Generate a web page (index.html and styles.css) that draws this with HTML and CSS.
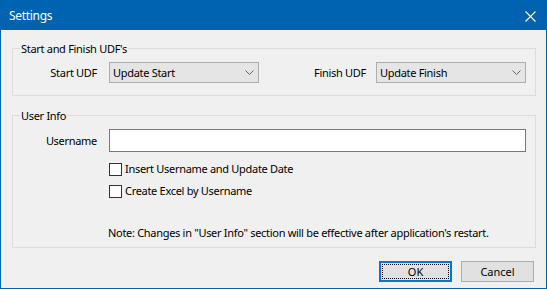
FILE: index.html
```html
<!DOCTYPE html>
<html lang="en">
<head>
    <meta charset="UTF-8">
    <title>Settings</title>
    <link rel="stylesheet" href="styles.css">
</head>
<body>
<div class="window">
    <div class="titlebar">
        <span class="title">Settings</span>
        <svg class="close" width="11" height="11" viewBox="0 0 11 11">
            <path d="M0.5 0.5 L10.5 10.5 M10.5 0.5 L0.5 10.5" stroke="#fff" stroke-width="1.1" fill="none"/>
        </svg>
    </div>

    <div class="content">
        <div class="group group-udf">
            <div class="group-title">Start and Finish UDF's</div>
            <div class="udf-row">
                <span class="label label-start">Start UDF</span>
                <div class="combo">
                    <span>Update Start</span>
                    <svg width="9" height="5" viewBox="0 0 9 5"><path d="M0.5 0.5 L4.5 4.5 L8.5 0.5" stroke="#606060" fill="none"/></svg>
                </div>
                <span class="label label-finish">Finish UDF</span>
                <div class="combo">
                    <span>Update Finish</span>
                    <svg width="9" height="5" viewBox="0 0 9 5"><path d="M0.5 0.5 L4.5 4.5 L8.5 0.5" stroke="#606060" fill="none"/></svg>
                </div>
            </div>
        </div>

        <div class="group group-user">
            <div class="group-title">User Info</div>
            <div class="user-row">
                <span class="label label-start">Username</span>
                <div class="textbox"></div>
            </div>
            <div class="check-row first">
                <span class="checkbox"></span>
                <span>Insert Username and Update Date</span>
            </div>
            <div class="check-row">
                <span class="checkbox"></span>
                <span>Create Excel by Username</span>
            </div>
            <div class="note">Note: Changes in "User Info" section will be effective after application's restart.</div>
        </div>

        <div class="buttons">
            <button class="btn btn-default">OK</button>
            <button class="btn">Cancel</button>
        </div>
    </div>
</div>
</body>
</html>
```

FILE: styles.css
```css
* {
    margin: 0;
    padding: 0;
    box-sizing: border-box;
}
body {
    font-family: 'Segoe UI', 'Noto Sans', sans-serif;
    font-size: 11px;
    letter-spacing: -0.3px;
    line-height: 16px;
    color: #000;
    background: #f0f0f0;
}
.window {
    width: 547px;
    height: 289px;
    border: 1px solid #0063b1;
    background: #f0f0f0;
    display: flex;
    flex-direction: column;
}
.titlebar {
    flex-shrink: 0;
    height: 29px;
    background: #0063b1;
    color: #fff;
    font-size: 12px;
    letter-spacing: -0.3px;
    display: flex;
    align-items: center;
    justify-content: space-between;
    padding: 0 10px 0 8px;
}
.close {
    margin-top: 1px;
}
.content {
    flex: 1;
    padding: 18px 10px 0 11px;
    display: flex;
    flex-direction: column;
}
.group {
    border: 1px solid #dcdcdc;
    padding: 0 9px 0 0;
}
.group-title {
    margin: -8px 0 0 7px;
    padding: 0 1px;
    width: fit-content;
    background: #f0f0f0;
}
.udf-row {
    display: flex;
    align-items: center;
    margin-top: 5px;
    padding-bottom: 12px;
}
.label-start {
    width: 84px;
    text-align: right;
    margin-right: 12px;
}
.label-finish {
    flex: 1;
    text-align: right;
    margin-right: 10px;
}
.combo {
    width: 150px;
    height: 21px;
    background: #e5e5e5;
    border: 1px solid #adadad;
    display: flex;
    align-items: center;
    justify-content: space-between;
    padding: 0 4px 0 3px;
}
.group-user {
    margin-top: 19px;
    padding-bottom: 6px;
}
.user-row {
    display: flex;
    align-items: center;
    margin-top: 5px;
}
.textbox {
    flex: 1;
    height: 23px;
    background: #fff;
    border: 1px solid #7a7a7a;
}
.check-row {
    display: flex;
    align-items: center;
    gap: 3px;
    margin: 6px 0 0 96px;
}
.check-row.first {
    margin-top: 9px;
}
.checkbox {
    width: 13px;
    height: 13px;
    background: #fff;
    border: 1px solid #333;
}
.note {
    margin: 26px 0 0 95px;
}
.buttons {
    display: flex;
    justify-content: flex-end;
    gap: 9px;
    margin: 13px 2px 0 0;
}
.btn {
    width: 73px;
    height: 21px;
    background: #e1e1e1;
    border: 1px solid #adadad;
    font: inherit;
    color: #000;
}
.btn-default {
    border: 2px solid #0078d7;
    outline: 1px dotted #000;
    outline-offset: -4px;
}
```
